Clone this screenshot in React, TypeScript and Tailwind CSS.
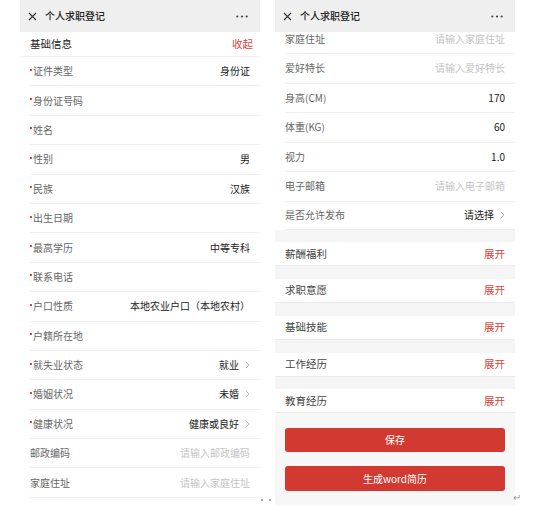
import React from "react";

const FONT = { fontFamily: '"Noto Sans CJK SC", "Noto Sans", sans-serif' };

type Row = { label: string; req?: boolean; value?: string; placeholder?: string; chevron?: boolean };

const leftRows: Row[] = [
  { label: "证件类型", req: true, value: "身份证" },
  { label: "身份证号码", req: true },
  { label: "姓名", req: true },
  { label: "性别", req: true, value: "男" },
  { label: "民族", req: true, value: "汉族" },
  { label: "出生日期", req: true },
  { label: "最高学历", req: true, value: "中等专科" },
  { label: "联系电话", req: true },
  { label: "户口性质", req: true, value: "本地农业户口（本地农村）" },
  { label: "户籍所在地", req: true },
  { label: "就失业状态", req: true, value: "就业", chevron: true },
  { label: "婚姻状况", req: true, value: "未婚", chevron: true },
  { label: "健康状况", req: true, value: "健康或良好", chevron: true },
  { label: "邮政编码", placeholder: "请输入邮政编码" },
  { label: "家庭住址", placeholder: "请输入家庭住址" },
];

const rightRows: Row[] = [
  { label: "家庭住址", placeholder: "请输入家庭住址" },
  { label: "爱好特长", placeholder: "请输入爱好特长" },
  { label: "身高(CM)", value: "170" },
  { label: "体重(KG)", value: "60" },
  { label: "视力", value: "1.0" },
  { label: "电子邮箱", placeholder: "请输入电子邮箱" },
  { label: "是否允许发布", value: "请选择", chevron: true },
];

const sections = ["薪酬福利", "求职意愿", "基础技能", "工作经历", "教育经历"];

function Chevron() {
  return (
    <svg width="5" height="8" viewBox="0 0 5 8" className="ml-[6px]">
      <path d="M0.8 0.8 L4 4 L0.8 7.2" fill="none" stroke="#b5b5b5" strokeWidth="0.9" />
    </svg>
  );
}

function Header() {
  return (
    <div className="h-[32px] bg-[#efefef] flex items-center pl-[8px] pr-[12px] shrink-0">
      <svg width="9" height="9" viewBox="0 0 9 9">
        <path d="M1 1 L8 8 M8 1 L1 8" stroke="#333" strokeWidth="1.1" />
      </svg>
      <span className="ml-[8px] text-[10px] font-medium text-[#222] leading-none">个人求职登记</span>
      <div className="flex-1" />
      <svg width="12" height="3" viewBox="0 0 12 3">
        <circle cx="1.3" cy="1.5" r="1.1" fill="#444" />
        <circle cx="6" cy="1.5" r="1.1" fill="#444" />
        <circle cx="10.7" cy="1.5" r="1.1" fill="#444" />
      </svg>
    </div>
  );
}

function FormRow({ r, h }: { r: Row; h: string }) {
  return (
    <div className={`${h} ml-[10px] pr-[10px] flex items-center border-b border-[#efefef] shrink-0`}>
      {r.req && <span className="w-[2px] h-[2px] bg-[#e0463c] mr-[1px] -mt-[3px]" />}
      <span className="text-[10px] text-[#666] leading-none">{r.label}</span>
      <div className="flex-1" />
      {r.value && <span className="text-[10px] text-[#222] leading-none">{r.value}</span>}
      {r.placeholder && <span className="text-[10px] text-[#c4c4c4] leading-none">{r.placeholder}</span>}
      {r.chevron && <Chevron />}
    </div>
  );
}

export default function App() {
  return (
    <div className="relative w-[554px] h-[511px] bg-white flex overflow-hidden" style={FONT}>
      {/* Left phone */}
      <div className="ml-[20px] w-[240px] flex flex-col">
        <Header />
        <div className="h-[25px] px-[10px] pr-[7px] flex items-center border-b border-[#efefef] shrink-0">
          <span className="text-[10.5px] text-[#222] leading-none">基础信息</span>
          <div className="flex-1" />
          <span className="text-[10.5px] text-[#d9443a] leading-none">收起</span>
        </div>
        {leftRows.map((r) => (
          <FormRow key={r.label} r={r} h="h-[29.4px]" />
        ))}
      </div>

      {/* Right phone */}
      <div className="ml-[15px] w-[240px] h-[505px] flex flex-col">
        <Header />
        <div className="flex-1 overflow-hidden flex flex-col">
          <div className="-mt-[7.5px] flex flex-col">
            {rightRows.map((r, i) => (
              <FormRow key={r.label} r={r} h={i === rightRows.length - 1 ? "h-[28px]" : "h-[29.5px]"} />
            ))}
          </div>
          {sections.map((s) => (
            <div key={s} className="flex flex-col shrink-0">
              <div className="h-[12.75px] bg-[#f5f5f5]" />
              <div className="h-[24px] px-[10px] flex items-center border-b border-[#ececec]">
                <span className="text-[10.5px] text-[#444] leading-none">{s}</span>
                <div className="flex-1" />
                <span className="text-[10.5px] text-[#d9443a] leading-none">展开</span>
              </div>
            </div>
          ))}
          <div className="flex-1 bg-[#f7f7f7] px-[10px] pt-[15px] flex flex-col">
            <button className="h-[24px] w-full rounded-[3px] bg-[#d23a31] text-white text-[10px] leading-none flex items-center justify-center">
              保存
            </button>
            <button className="mt-[14px] h-[25px] w-full rounded-[3px] bg-[#d23a31] text-white text-[10px] leading-none flex items-center justify-center">
              生成word简历
            </button>
          </div>
        </div>
      </div>

      {/* document artifacts */}
      <span className="absolute left-[261px] top-[499px] w-[2px] h-[2px] bg-[#aaa]" />
      <span className="absolute left-[269px] top-[499px] w-[2px] h-[2px] bg-[#aaa]" />
      <span className="absolute left-[513px] top-[492px] text-[10px] text-[#999] leading-none">↵</span>
    </div>
  );
}
